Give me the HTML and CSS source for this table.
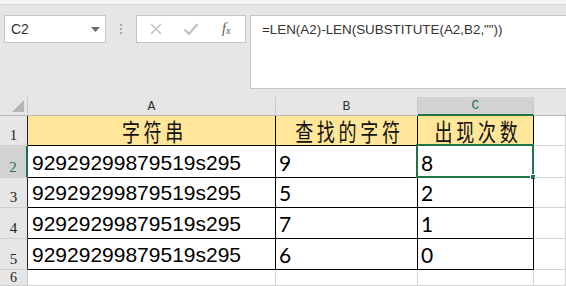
FILE: index.html
```html
<!DOCTYPE html>
<html>
<head>
<meta charset="utf-8">
<link rel="stylesheet" href="styles.css">
</head>
<body>
<div class="topstrip"></div>
<div class="toolbar">
  <div class="namebox"><span class="ref">C2</span>
    <svg class="caret" width="9" height="5" viewBox="0 0 9 5"><path d="M0 0H9L4.5 5Z" fill="#6a6a6a"/></svg>
  </div>
  <div class="dots"><span></span><span></span><span></span></div>
  <div class="fxbox">
    <svg width="14" height="14" viewBox="0 0 14 14"><path d="M2 2L12 12M12 2L2 12" stroke="#bdbdbd" stroke-width="1.4" fill="none"/></svg>
    <svg width="16" height="14" viewBox="0 0 16 14"><path d="M1.5 7.5L6 12L14.5 2" stroke="#bdbdbd" stroke-width="2" fill="none"/></svg>
    <span class="fx">f<sub>x</sub></span>
  </div>
  <div class="formula">=LEN(A2)-LEN(SUBSTITUTE(A2,B2,""))</div>
</div>
<div class="grid">
  <div class="corner"><svg width="12" height="12" viewBox="0 0 12 12"><path d="M12 0V12H0Z" fill="#b5b5b5"/></svg></div>
  <div class="colh">A</div>
  <div class="colh">B</div>
  <div class="colh sel">C</div>
  <div class="colh last"></div>

  <div class="rowh boxed">1</div>
  <div class="cell head bx"><span class="cjk">字符串</span></div>
  <div class="cell head bx"><span class="cjk">查找的字符</span></div>
  <div class="cell head bx"><span class="cjk">出现次数</span></div>
  <div class="cell"></div>

  <div class="rowh sel">2</div>
  <div class="cell str bx">92929299879519s295</div>
  <div class="cell num bx">9</div>
  <div class="cell num bx active">8<span class="selbox"><span class="handle"></span></span></div>
  <div class="cell"></div>

  <div class="rowh boxed">3</div>
  <div class="cell str bx">92929299879519s295</div>
  <div class="cell num bx">5</div>
  <div class="cell num bx">2</div>
  <div class="cell"></div>

  <div class="rowh boxed">4</div>
  <div class="cell str bx">92929299879519s295</div>
  <div class="cell num bx">7</div>
  <div class="cell num bx">1</div>
  <div class="cell"></div>

  <div class="rowh boxed">5</div>
  <div class="cell str bx">92929299879519s295</div>
  <div class="cell num bx">6</div>
  <div class="cell num bx">0</div>
  <div class="cell"></div>

  <div class="rowh small">6</div>
  <div class="cell"></div>
  <div class="cell"></div>
  <div class="cell"></div>
  <div class="cell"></div>
</div>
</body>
</html>
```

FILE: styles.css
```css
* { box-sizing: border-box; }
html, body { margin: 0; padding: 0; }
body {
  width: 566px;
  height: 286px;
  overflow: hidden;
  background: #e6e6e6;
  font-family: "Liberation Sans", Arial, sans-serif;
}
.topstrip {
  height: 5px;
  background: #f3f3f3;
  border-bottom: 1px solid #d5d5d5;
}
.toolbar {
  display: flex;
  align-items: flex-start;
  padding-top: 10px;
  height: 84px;
}
.namebox {
  margin-left: 4px;
  width: 102px;
  height: 28px;
  background: #fff;
  border: 1px solid #c6c6c6;
  display: flex;
  align-items: center;
  justify-content: space-between;
  padding: 0 5px 0 6px;
}
.ref { font-size: 14px; color: #333; }
.caret { margin-top: 1px; }
.dots {
  width: 30px;
  height: 28px;
  display: flex;
  flex-direction: column;
  align-items: center;
  justify-content: center;
  gap: 2px;
}
.dots span { width: 2px; height: 2px; background: #a8a8a8; }
.fxbox {
  width: 110px;
  height: 28px;
  background: #fff;
  border: 1px solid #c6c6c6;
  display: flex;
  align-items: center;
  padding-left: 12px;
  gap: 20px;
}
.fx {
  font-family: "Liberation Serif", serif;
  font-style: italic;
  font-size: 14px;
  color: #555;
  margin-left: 3px;
}
.fx sub { font-size: 10px; vertical-align: -1px; }
.formula {
  margin-left: 4px;
  flex: 1;
  height: 74px;
  background: #fff;
  border: 1px solid #c6c6c6;
  border-right: none;
  padding: 6px 0 0 11px;
  font-size: 13.4px;
  color: #333;
}
.grid {
  margin-top: 8px;
  display: grid;
  grid-template-columns: 28px 248px 142px 116px 1fr;
  grid-template-rows: 19px 30px 32px 30px 31px 31px 16px;
  background: #fff;
}
.corner {
  background: #e6e6e6;
  border-right: 1px solid #c8c8c8;
  border-bottom: 1px solid #b8b8b8;
  display: flex;
  align-items: flex-end;
  justify-content: flex-end;
  padding: 0 3px 3px 0;
}
.colh {
  background: #e6e6e6;
  border-right: 1px solid #c8c8c8;
  border-bottom: 1px solid #b8b8b8;
  font-family: "Liberation Mono", monospace;
  font-size: 13px;
  color: #333;
  display: flex;
  justify-content: center;
  align-items: flex-end;
  padding-bottom: 1px;
}
.colh.sel {
  background: #d2d2d2;
  color: #217346;
  border-bottom: 2px solid #217346;
}
.colh.last { border-right: none; }
.rowh {
  background: #e6e6e6;
  border-right: 1px solid #c8c8c8;
  border-bottom: 1px solid #d0d0d0;
  font-family: "Liberation Serif", serif;
  font-size: 15px;
  color: #222;
  display: flex;
  justify-content: center;
  align-items: flex-end;
  padding-bottom: 1px;
}
.rowh.boxed { border-right-color: #222; }
.rowh.sel {
  background: #d2d2d2;
  color: #217346;
  border-right: 2px solid #217346;
}
.rowh.small { font-size: 14px; padding-bottom: 0; line-height: 15px; }
.cell {
  position: relative;
  border-right: 1px solid #d4d4d4;
  border-bottom: 1px solid #d4d4d4;
  display: flex;
  align-items: flex-end;
  padding: 0 0 2px 3px;
}
.cell.bx {
  border-right-color: #000;
  border-bottom-color: #000;
}
.cell.head {
  background: #ffe699;
  justify-content: center;
  align-items: center;
  padding: 0;
}
.cjk {
  font-family: "Noto Sans CJK SC", sans-serif;
  font-size: 24px;
  line-height: 28px;
  letter-spacing: 5px;
  margin-right: -5px;
  color: #111;
  display: inline-block;
  transform: scaleX(0.75);
}
.str {
  font-family: "Liberation Sans", Arial, sans-serif;
  font-size: 21px;
  color: #000;
  padding-left: 4px;
}
.num {
  font-family: Lato, "Liberation Sans", sans-serif;
  font-size: 21px;
  color: #000;
  padding-left: 3px;
}
.selbox {
  position: absolute;
  left: -2px;
  top: -2px;
  right: -1px;
  bottom: -1px;
  border: 2px solid #217346;
}
.handle {
  position: absolute;
  right: -4px;
  bottom: -4px;
  width: 6px;
  height: 6px;
  background: #217346;
  border: 1px solid #fff;
}
```
